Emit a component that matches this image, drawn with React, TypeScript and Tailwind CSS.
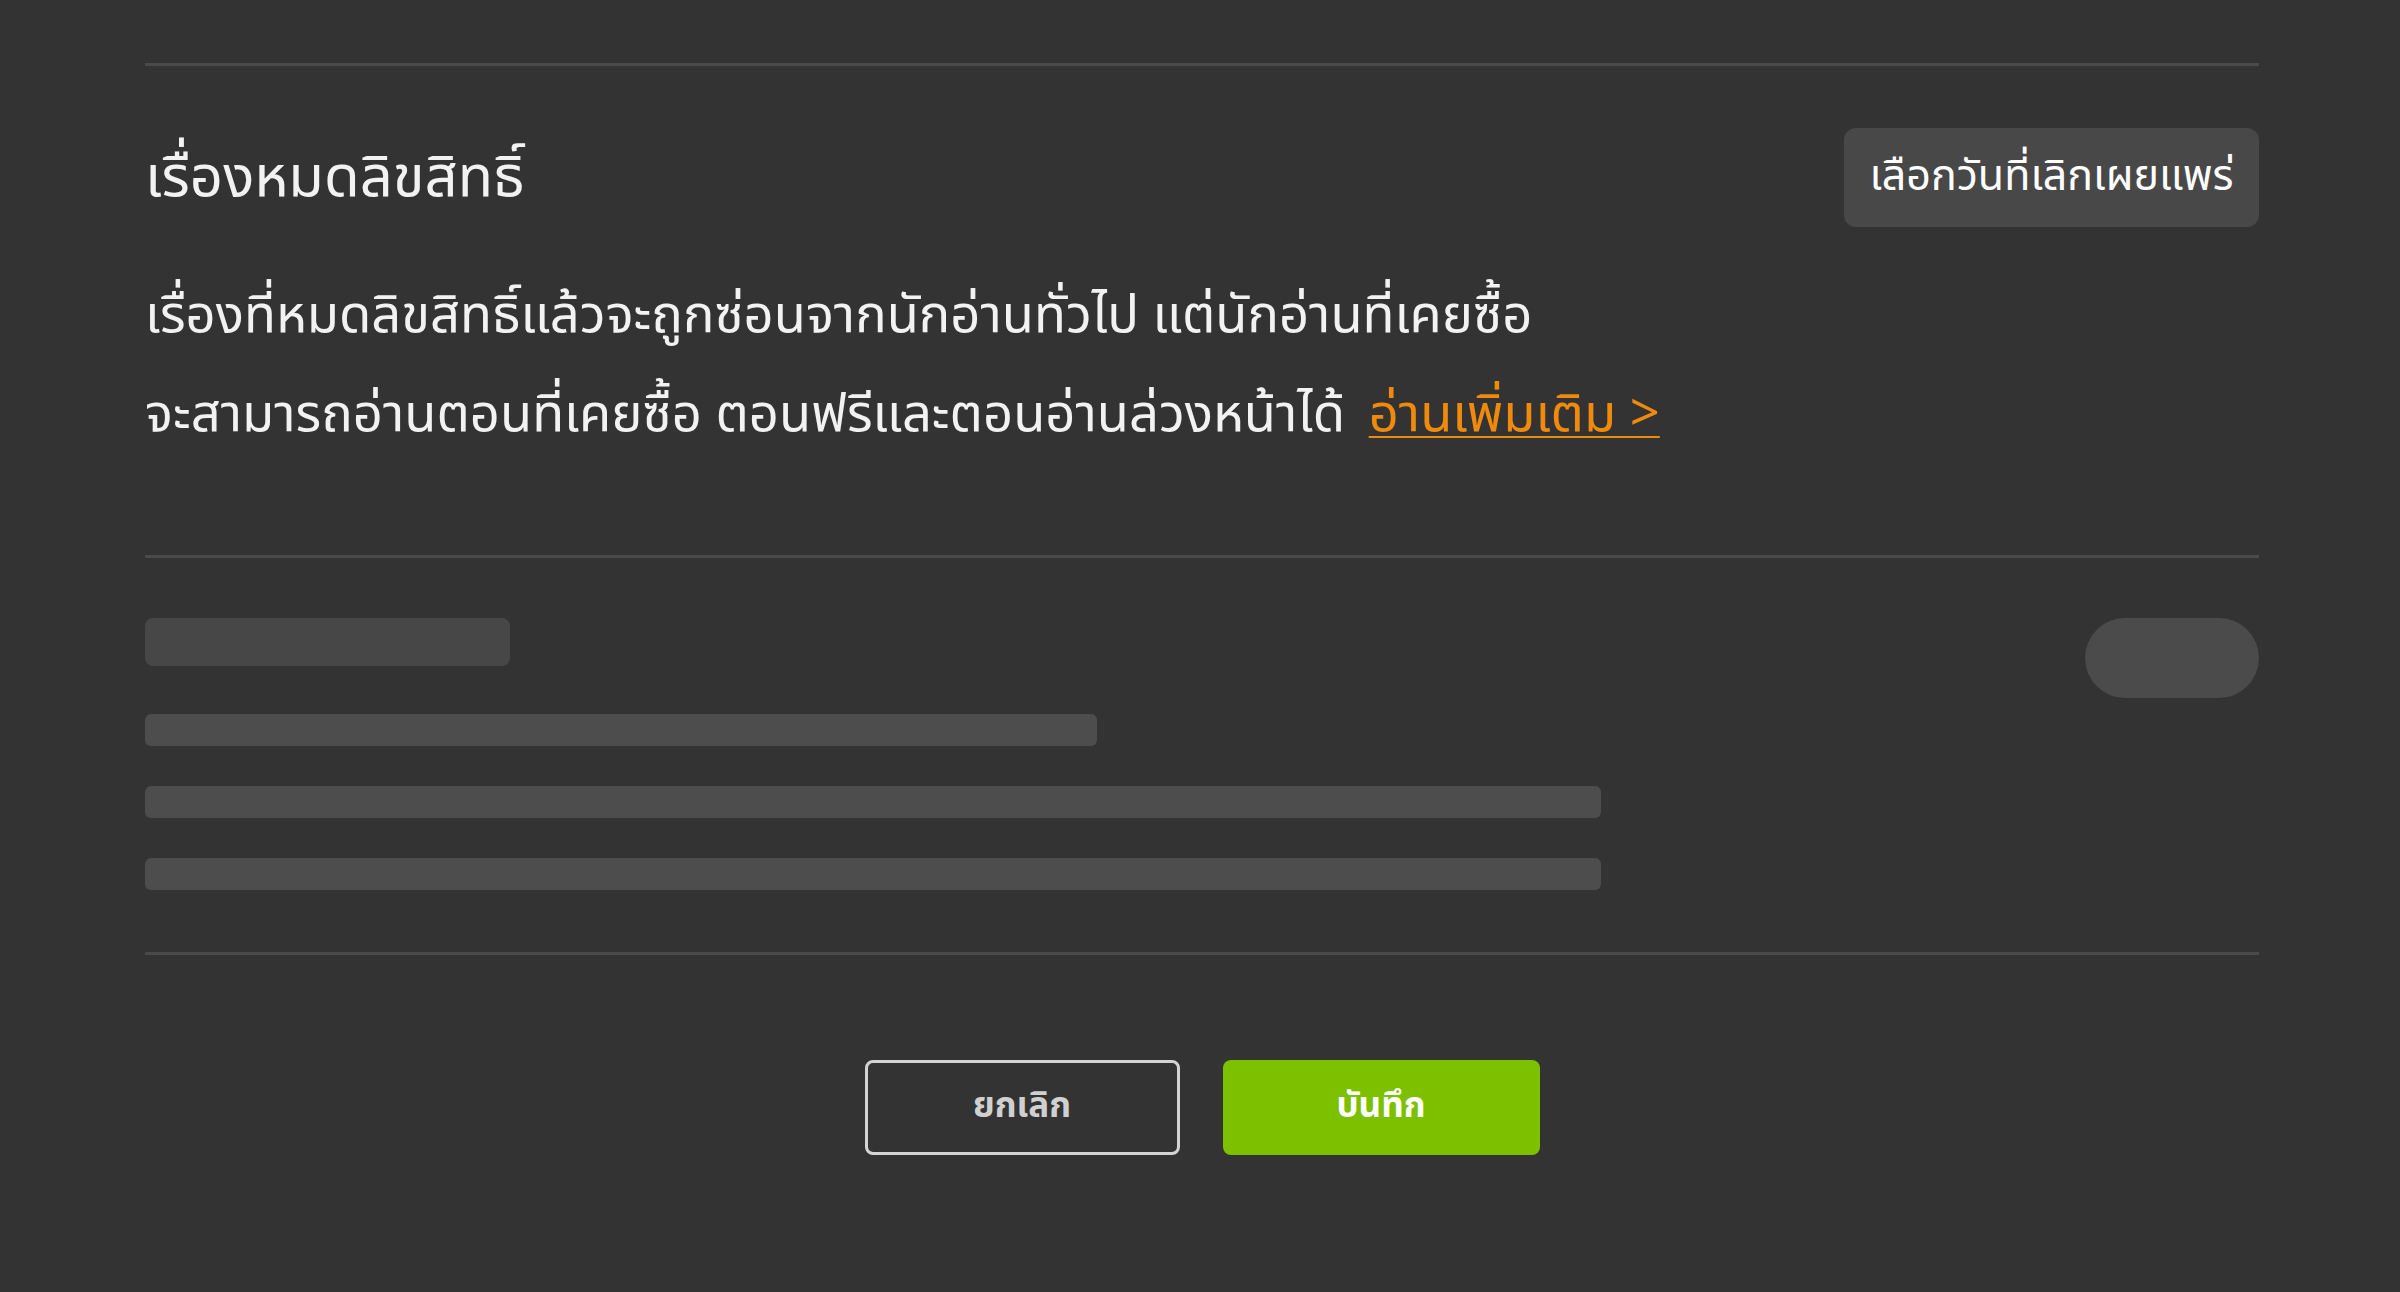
const font = { fontFamily: '"Noto Sans Thai", "Noto Sans", sans-serif' }

function Skeleton() {
  return (
    <div className="flex items-start justify-between pt-[60px] pb-[62px]">
      <div className="flex flex-col">
        <div className="h-[48px] w-[365px] rounded-[8px] bg-[#474747]" />
        <div className="mt-[48px] h-[32px] w-[952px] rounded-[6px] bg-[#4d4d4d]" />
        <div className="mt-[40px] h-[32px] w-[1456px] rounded-[6px] bg-[#4d4d4d]" />
        <div className="mt-[40px] h-[32px] w-[1456px] rounded-[6px] bg-[#4d4d4d]" />
      </div>
      <div className="h-[80px] w-[174px] rounded-full bg-[#4b4b4b]" />
    </div>
  )
}

export default function App() {
  return (
    <div className="min-h-screen w-full bg-[#333333] text-[#f2f2f2]" style={font}>
      <div className="ml-[145px] mr-[141px] pt-[63px]">
        <div className="h-[3px] bg-[#4a4a4a]" />

        <div className="mt-[62px] flex items-center justify-between">
          <h1 className="text-[58px] leading-[70px] font-normal">เรื่องหมดลิขสิทธิ์</h1>
          <button className="h-[99px] w-[415px] rounded-[12px] bg-[#484848] text-[43px] text-white">
            เลือกวันที่เลิกเผยแพร่
          </button>
        </div>

        <p className="mt-[40px] text-[52.5px] leading-[99px]">
          เรื่องที่หมดลิขสิทธิ์แล้วจะถูกซ่อนจากนักอ่านทั่วไป แต่นักอ่านที่เคยซื้อ
          <br />
          จะสามารถอ่านตอนที่เคยซื้อ ตอนฟรีและตอนอ่านล่วงหน้าได้{' '}
          <a href="#" className="ml-[10px] text-[#f08a0c] underline decoration-2 underline-offset-[5px]">
            อ่านเพิ่มเติม &gt;
          </a>
        </p>

        <div className="mt-[90px] h-[3px] bg-[#4a4a4a]" />
        <Skeleton />
        <div className="h-[3px] bg-[#4a4a4a]" />

        <div className="mt-[105px] flex justify-center gap-[43px]">
          <button className="h-[95px] w-[315px] rounded-[8px] border-[3px] border-[#d4d4d4] text-[35px] font-bold text-[#d0d0d0]">
            ยกเลิก
          </button>
          <button className="h-[95px] w-[317px] rounded-[8px] bg-[#7dc000] text-[35px] font-bold text-white">
            บันทึก
          </button>
        </div>
      </div>
    </div>
  )
}
